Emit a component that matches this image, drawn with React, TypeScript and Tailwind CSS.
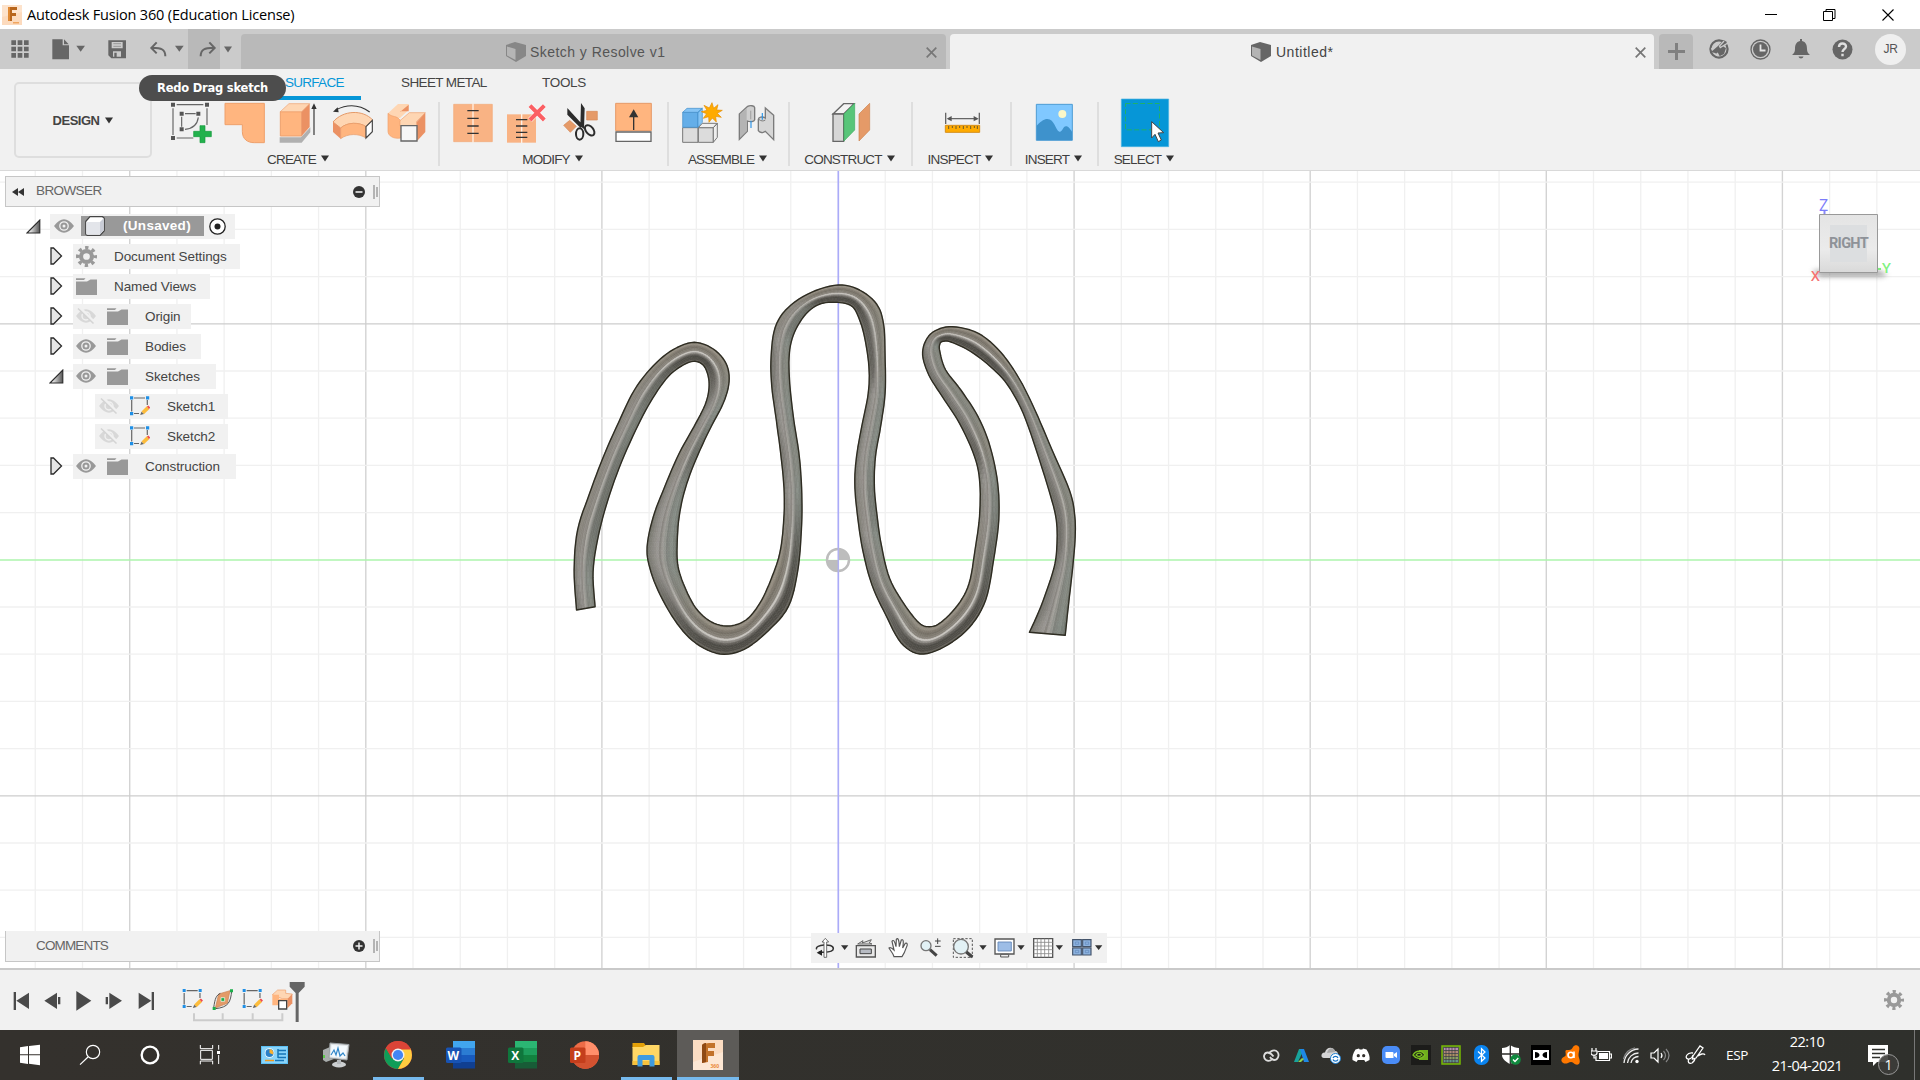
import React from "react";

type P = [number, number];

/* ---------- helpers ---------- */

// Drawing tile: the view box is in thirds of a pixel.
function Art({ v, children, className = "" }: { v: [number, number, number, number]; children?: React.ReactNode; className?: string }) {
  return (
    <svg className={"block shrink-0 " + className} width={v[2] / 3} height={v[3] / 3} viewBox={v.join(" ")} fill="none">
      {children}
    </svg>
  );
}

function Caret({ className = "", fill = "#333" }: { className?: string; fill?: string }) {
  return (
    <svg className={"block shrink-0 " + className} width="8" height="7" viewBox="0 0 8 7">
      <path d="M0 .5h8L4 6.5z" fill={fill} />
    </svg>
  );
}

/* ---------- title bar ---------- */

function TitleBar() {
  return (
    <header className="flex h-[29px] shrink-0 items-center bg-white font-['Open_Sans','Noto_Sans',sans-serif] text-black">
      <svg className="ml-[2px] block" width="20" height="20" viewBox="0 0 20 20">
        <rect width="20" height="20" fill="#fde3cc" />
        <path d="M0 12 20 7v13H0z" fill="#fbd3b2" opacity=".6" />
        <path d="M6 2h9v3h-5v3h4v3h-4v5H6z" fill="#b8651b" />
        <path d="M6 2h2v14H6z" fill="#e08a35" />
        <path d="M11 17h6v1.5h-6z" fill="#f0a55e" />
      </svg>
      <span className="ml-[5px] text-[14.5px] leading-[20px] tracking-[-0.17px] whitespace-nowrap">Autodesk Fusion 360 (Education License)</span>
      <div className="ml-auto flex items-center pr-[25px]">
        <svg width="13" height="14" viewBox="0 0 13 14"><path d="M1 6.500h12" stroke="#000" /></svg>
        <svg className="ml-[46px]" width="13" height="14" viewBox="0 0 13 14" fill="none" stroke="#000"><path d="M.5 3.500h9v9h-9zM3 3.500V1.500h9v9H10" /></svg>
        <svg className="ml-[46px]" width="13" height="14" viewBox="0 0 13 14"><path d="m.5 1.500 11 11m0-11-11 11" stroke="#000" strokeWidth="1.100" /></svg>
      </div>
    </header>
  );
}

/* ---------- document tab bar ---------- */

function CubeIcon() {
  return (
    <svg className="block" width="20" height="20" viewBox="0 0 20 20">
      <path d="M0 3 9 0l11 3v11l-10 6L0 14z" fill="#666" />
      <path d="M1 4.500 9.500 7v11L1 13.500z" fill="#b4b4b4" />
    </svg>
  );
}

function CloseX({ className = "" }: { className?: string }) {
  return (
    <svg className={className} width="11" height="11" viewBox="0 0 11 11"><path d="m.7.7 9.600 9.600m0-9.600L.7 10.300" stroke="#777" strokeWidth="1.700" /></svg>
  );
}

function TabBar() {
  return (
    <div className="flex h-[40px] shrink-0 bg-[#cbcbcb] font-['Liberation_Sans',Arial,sans-serif]">
      <div className="flex h-[40px] w-[188px] items-center">
        <Art v={[0, 0, 102, 120]}>
          <path d="M34 34h14v14H34zM53 34h14v14H53zM72 34h14v14H72zM34 53h14v14H34zM53 53h14v14H53zM72 53h14v14H72zM34 72h14v14H34zM53 72h14v14H53zM72 72h14v14H72z" fill="#666" />
        </Art>
        <Art v={[102, 0, 178, 120]}>
          <path d="M157 31h31v18h19v42h-50z" fill="#666" />
          <path d="m192 31 14 15h-14z" fill="#666" />
          <path d="M229 50h26l-13 18z" fill="#666" />
        </Art>
        <Art v={[280, 0, 140, 120]}>
          <path fillRule="evenodd" d="M326 34h53v54h-44l-9-9zM336 39v19h33V39zM340 67v16h24V67zM344 71h7v12h-7z" fill="#666" />
          <path d="M341 44h23M341 52h23" stroke="#999" strokeWidth="3" />
        </Art>
        <Art v={[420, 0, 144, 120]}>
          <path d="M496 82c0-20-12-26-38-26M470 40l-16 17 16 16" stroke="#666" strokeWidth="6" />
          <path d="M525 50h26l-13 18z" fill="#666" />
        </Art>
      </div>
      <div className="w-[32px] bg-[#b9b9b9]">
        <Art v={[564, 0, 96, 120]}>
          <path d="M602 82c0-20 12-26 38-26M628 40l16 17-16 16" stroke="#666" strokeWidth="6" />
        </Art>
      </div>
      <div className="flex w-[21px] items-center pl-[4px]"><Caret fill="#666" /></div>
      <div className="mt-[5px] flex w-[705px] items-center rounded-t-[4px] bg-[#b9b9b9] pt-[1px]">
        <span className="ml-[265px] opacity-60"><CubeIcon /></span>
        <span className="mt-[1px] ml-[4px] text-[14px] tracking-[0.45px] whitespace-nowrap text-[#555]">Sketch y Resolve v1</span>
        <CloseX className="mr-[9px] ml-auto" />
      </div>
      <div className="mt-[5px] ml-[4px] flex w-[704px] items-center rounded-t-[4px] bg-[#f1f1f1] pt-[1px]">
        <span className="ml-[301px]"><CubeIcon /></span>
        <span className="mt-[1px] ml-[5px] text-[14px] tracking-[0.5px] whitespace-nowrap text-[#444]">Untitled*</span>
        <CloseX className="mr-[8px] ml-auto" />
      </div>
      <div className="mt-[5px] ml-[5px] flex w-[34px] items-center justify-center rounded-t-[4px] bg-[#b9b9b9]">
        <svg width="17" height="17" viewBox="0 0 17 17"><path d="M8.500 0v17M0 8.500h17" stroke="#808080" strokeWidth="3" /></svg>
      </div>
      <div className="flex h-[40px] flex-1 items-center pl-[16px]">
        <svg width="20" height="20" viewBox="0 0 20 20" fill="none">
          <circle cx="10" cy="10" r="8.600" stroke="#666" strokeWidth="2.200" />
          <path d="M2 13 9 7l2-1 6 3-2 6-4 2-5-3z" fill="#666" />
          <path d="M14.500 1 9.500 6.500l1.500 3L14 8l4-5z" fill="#666" />
          <path d="m15 2-4.500 5 .8 1.500L18 4.500" stroke="#cbcbcb" strokeWidth="1.300" />
          <path d="M2.500 10.500 7 6M8 14l1.500 3" stroke="#cbcbcb" strokeWidth="1.800" />
        </svg>
        <svg className="ml-[21px]" width="21" height="21" viewBox="0 0 21 21" fill="none">
          <circle cx="10.500" cy="10.500" r="9.500" stroke="#666" strokeWidth="1.300" />
          <circle cx="10.500" cy="10.500" r="7.500" fill="#666" />
          <path d="M10.500 5.500v6h5" stroke="#e4e4e4" strokeWidth="1.800" />
        </svg>
        <svg className="ml-[21px]" width="18" height="20" viewBox="0 0 18 20">
          <path d="M8 0h2v2c4 1 5 4 5 8 0 3 1 4.500 3 6H0c2-1.500 3-3 3-6 0-4 1-7 5-8zM6.500 17.500h5c-.5 2.500-4.500 2.500-5 0z" fill="#666" />
        </svg>
        <svg className="ml-[22px]" width="21" height="21" viewBox="0 0 21 21" fill="none">
          <circle cx="10.500" cy="10.500" r="10" fill="#666" />
          <path d="M7 8c0-4.500 7-4.500 7-.5 0 2.500-3.500 2.500-3.500 5.500M10.500 14.800v2.400" stroke="#dedede" strokeWidth="2.400" />
        </svg>
        <span className="ml-[22px] flex h-[31px] w-[31px] items-center justify-center rounded-full bg-[#efefef] text-[12px] tracking-[-0.3px] text-[#555]">JR</span>
      </div>
    </div>
  );
}

/* ---------- ribbon ---------- */

const OR = "#ffb57f";
const OD = "#eb9163";
const OL = "#fed6b3";

function Divider() {
  return <div className="mt-[4px] h-[64px] w-[2px] shrink-0 bg-[#dedede]" />;
}

function Group({ label, className, children }: { label: string; className: string; children: React.ReactNode }) {
  return (
    <div className={"flex shrink-0 flex-col overflow-hidden " + className}>
      <div className="flex h-[51px]">{children}</div>
      <div className="flex h-[21px] items-center justify-center pr-[2px]">
        <span className="mt-[1px] text-[13.500px] leading-[20px] tracking-[-0.82px] whitespace-nowrap text-[#3f3f3f]">{label}</span>
        <Caret className="mt-[-2px] ml-[5px]" />
      </div>
    </div>
  );
}

function Ribbon() {
  return (
    <div className="flex h-[102px] shrink-0 border-b border-[#d9d9d9] bg-[#f1f1f1] font-['Liberation_Sans',Arial,sans-serif]">
      <div className="flex w-[160px] shrink-0 pt-[13px] pl-[14px]">
        <div className="flex h-[76px] w-[138px] items-center justify-center rounded-[5px] border-2 border-[#dedede] text-[13px] font-bold tracking-[-0.5px] text-[#444]">
          <span className="mt-[1px]">DESIGN</span>
          <Caret className="ml-[6px]" />
        </div>
      </div>
      <div className="flex flex-1 flex-col">
        <div className="flex h-[29px] text-[13.500px] leading-[28px] tracking-[-0.72px] whitespace-nowrap text-[#444]">
          <div className="relative ml-[108px] w-[93px] pl-[17px] text-[#0696d7]">
            SURFACE
            <div className="absolute -bottom-[2px] left-0 h-[4px] w-full bg-[#0696d7]" />
          </div>
          <div className="ml-[40px] w-[141px] tracking-[-0.62px]">SHEET METAL</div>
          <div className="tracking-[-0.3px]">TOOLS</div>
        </div>
        <div className="flex h-[72px]">
          <Group label="CREATE" className="w-[278px]">
            <Art v={[480, 294, 175, 153]}>
              <path d="M519 325v80M530 314h80M621 325v50M530 414h50" stroke="#666" strokeWidth="3.500" />
              <path d="M555 341h32M545 350v30M595 352c-3 22-18 34-40 36" stroke="#666" strokeWidth="3.500" />
              <g fill="#555">
                <path d="M513 308h12v12h-12zM615 308h12v12h-12zM513 408h12v12h-12zM539 335h12v12h-12zM589 335h12v12h-12zM539 382h12v12h-12z" />
              </g>
              <path d="M600 377h15v17h19v16h-19v18h-15v-18h-19v-16h19z" fill="#22b14c" stroke="#159a3c" strokeWidth="2" />
            </Art>
            <Art v={[655, 294, 165, 153]}>
              <path d="M676 310h118v118h-30c-20 0-36-10-36-34v-20h-52z" fill={OR} stroke="#eea06c" strokeWidth="3" />
            </Art>
            <Art v={[820, 294, 160, 153]}>
              <path d="M840 412h64l28-30v15l-26 31h-66z" fill="#b0b0b0" />
              <path d="M842 335h64v73h-64z" fill={OR} stroke="#eea06c" strokeWidth="3" />
              <path d="m842 335 26-24h62l-24 24z" fill={OL} stroke="#eea06c" strokeWidth="2" />
              <path d="m906 335 24-24v70l-24 27z" fill={OD} />
              <path d="M943 405v-84" stroke="#333" strokeWidth="3.500" /><path d="m943 310 8 17h-16z" fill="#333" />
            </Art>
            <Art v={[980, 294, 165, 153]}>
              <path d="M1006 330c35-18 72-16 102 6" stroke="#333" strokeWidth="3.500" /><path d="m998 335 14-13 3 15z" fill="#333" />
              <path d="M998 366c30-36 90-38 119-6l-20 20c-20-14-56-14-76 4z" fill={OL} stroke="#e59a68" strokeWidth="3" />
              <path d="M1021 384c20-18 56-18 76-4v34c-22-14-54-14-76 2z" fill={OR} stroke="#e59a68" strokeWidth="2" />
              <path d="m998 366 23 18v32l-23-20z" fill={OD} />
              <path d="m1097 380 19-19v34l-19 19z" fill="#fff" stroke="#444" strokeWidth="3.500" />
            </Art>
            <Art v={[1145, 294, 169, 153]}>
              <path d="m1163 340 30-28h32v18l-26 24h-36z" fill={OL} />
              <path d="m1199 336 26-22v20h-26z" fill={OD} />
              <path d="M1163 340c14 14 24 4 38 22v52c-20 4-38-6-38-20z" fill={OR} stroke="#eea06c" strokeWidth="2" />
              <path d="m1199 362 28-24h48l-26 26v14h-50z" fill={OL} stroke="#eea06c" strokeWidth="2" />
              <path d="m1249 366 26-28v58l-24 26z" fill={OD} />
              <path d="M1202 377h48v46h-48z" fill="#f6f6f6" stroke="#666" strokeWidth="4" />
            </Art>
          </Group>
          <Divider />
          <Group label="MODIFY" className="w-[227px]">
            <Art v={[0, 54, 178, 153]}>
              <path d="M41 73h116v112H41z" fill="#f9b384" stroke="#f3ab7a" strokeWidth="2" />
              <path d="M99 70v118" stroke="#fff1e6" strokeWidth="4" />
              <path d="M82 92h34M82 115h34M82 138h34M82 160h34" stroke="#333" strokeWidth="4" />
            </Art>
            <Art v={[178, 54, 167, 153]}>
              <path d="M202 103h87v85h-87z" fill="#f9b384" />
              <path d="M246 101v88" stroke="#fff1e6" strokeWidth="4" />
              <path d="M229 119h34M229 138h34M229 157h34M229 172h34" stroke="#333" strokeWidth="4" />
              <path d="m271 77 43 43m0-43-43 43" stroke="#fff" strokeWidth="16" opacity=".7" />
              <path d="m271 77 43 43m0-43-43 43" stroke="#fb5f63" strokeWidth="12" />
            </Art>
            <Art v={[345, 54, 155, 153]}>
              <path d="M440 94h32v26h-32zM371 136l18-15 20 18-18 18z" fill="#e59a68" stroke="#d58a58" strokeWidth="2" />
              <path d="m382 84 46 50-6 10-40-40zM423 69l11 16-2 62-11-8z" fill="#2c2c2c" />
              <ellipse cx="419" cy="162" rx="11" ry="17" stroke="#2c2c2c" strokeWidth="6" />
              <ellipse cx="449" cy="151" rx="11" ry="18" transform="rotate(-40 449 151)" stroke="#2c2c2c" strokeWidth="6" />
            </Art>
            <Art v={[500, 54, 181, 153]}>
              <path d="M526 70h107v82H526z" fill={OR} stroke="#e59a68" strokeWidth="3" />
              <path d="M527 156h105v28H527z" fill="#fff" stroke="#666" strokeWidth="4" />
              <path d="M580 150v-44" stroke="#333" strokeWidth="4" /><path d="m580 88 14 24h-28z" fill="#333" />
            </Art>
          </Group>
          <Divider />
          <Group label="ASSEMBLE" className="w-[119px]">
            <Art v={[687, 54, 173, 153]}>
              <path d="M728 143h46v44h-46zM775 143h45v44h-45z" fill="#dcdcdc" stroke="#777" strokeWidth="3" />
              <path d="m775 143 12-13h45l-12 13zM820 143l12-13v42l-12 15z" fill="#efefef" stroke="#777" strokeWidth="3" />
              <path d="M728 97h46v45h-46z" fill="#64aee8" stroke="#3f8cc8" strokeWidth="2" />
              <path d="m728 97 13-12h46l-13 12zM774 97l13-12v42l-13 14z" fill="#85c4f5" stroke="#3f8cc8" strokeWidth="2" />
              <path d="m816 68 5 17 13-11-4 16 17 1-15 9 12 12-17-3 2 17-12-12-10 13-1-17-16 5 10-14-16-6 17-4-9-15 16 8z" fill="#ffab00" stroke="#e58d00" strokeWidth="2" />
            </Art>
            <Art v={[860, 54, 184, 153]}>
              <path d="M897 102 922 79c8-4 20-2 21 4v36c-2 6-12 8-22 4v31l-24 24z" fill="#cfcfcf" stroke="#7b7b7b" strokeWidth="4" />
              <path d="m899 103 20-19v70l-20 19z" fill="#b4b4b4" />
              <path d="M931 92v26" stroke="#aaa" strokeWidth="4" />
              <path d="M1000 106 975 84v30c-10-6-20-2-21 4v34c4 6 14 8 21 2l25 25z" fill="#d6d6d6" stroke="#7b7b7b" strokeWidth="4" />
              <path d="M955 118c8 6 14 6 20 2" stroke="#7b7b7b" strokeWidth="3" />
              <path d="M932 122v22M966 99v20" stroke="#2b95e9" strokeWidth="3.500" />
            </Art>
          </Group>
          <Divider />
          <Group label="CONSTRUCT" className="w-[121px]">
            <Art v={[30, 54, 363, 153]}>
              <path d="M159 102 191 71h31l-31 31z" fill="#f3f3f3" stroke="#666" strokeWidth="4" />
              <path d="M159 102h32v82h-32z" fill="#d6d6d6" stroke="#666" strokeWidth="4" />
              <path d="m192 102 32-32v80l-32 33z" fill="#58c579" stroke="#3fae62" strokeWidth="2" />
              <path d="m237 102 32-32v80l-32 33z" fill="#e59a68" stroke="#cd834f" strokeWidth="2" />
            </Art>
          </Group>
          <Divider />
          <Group label="INSPECT" className="w-[97px]">
            <Art v={[399, 54, 291, 153]}>
              <path d="M497 98v34M598 98v34M505 116h86" stroke="#666" strokeWidth="4" />
              <path d="m500 116 15-8v16zM596 116l-15-8v16z" fill="#555" />
              <path d="M496 136h103v21H496z" fill="#ffab00" stroke="#d58e1b" strokeWidth="3" />
              <path d="M506 138v9M517 138v6M528 138v9M539 138v6M550 138v9M561 138v6M572 138v9M583 138v6M592 138v9" stroke="#6b5a2b" strokeWidth="3" />
            </Art>
          </Group>
          <Divider />
          <Group label="INSERT" className="w-[85px]">
            <Art v={[696, 54, 255, 153]}>
              <path d="M769 73h108v108H769z" fill="#80c8ff" stroke="#4e9cd3" strokeWidth="3" />
              <circle cx="847" cy="102" r="12" fill="#fbf8c9" />
              <path d="M770 137c16-16 24-20 32-20 22 0 24 34 36 38 10 2 10-16 20-16 8 0 12 8 18 16v25H770z" fill="#3e92cc" />
            </Art>
          </Group>
          <Divider />
          <Group label="SELECT" className="w-[92px]">
            <Art v={[957, 54, 276, 153]}>
              <path d="M1024 57h142v143h-142z" fill="#0696d7" stroke="#4db3e2" strokeWidth="2" />
              <path d="M1036.500 70.500h102v79h-102z" stroke="#1fb06a" strokeWidth="3" strokeDasharray="15 7" />
              <path d="m1115 125 36 33-17 1 10 21-9 5-10-22-10 11z" fill="#fff" stroke="#444" strokeWidth="3" />
            </Art>
          </Group>
        </div>
      </div>
    </div>
  );
}

/* ---------- model geometry ---------- */

// Matching points of the two silhouettes of the tube: [ax, ay, bx, by].
const RIBS: number[][] = [
  [48, 1020, 102, 1010], [41, 900, 96, 905], [51, 780, 111, 800], [86, 670, 139, 690], [126, 560, 179, 575],
  [171, 455, 227, 465], [216, 360, 269, 385], [271, 287, 314, 320], [330, 238, 358, 285], [390, 217, 392, 274],
  [445, 237, 418, 288], [482, 280, 431, 322], [491, 335, 432, 360], [474, 400, 421, 405], [434, 480, 389, 470],
  [394, 570, 346, 550], [364, 655, 304, 650], [346, 740, 271, 740], [340, 830, 253, 830], [343, 890, 261, 895],
  [362, 950, 291, 975], [395, 1015, 341, 1062], [440, 1056, 395, 1120], [490, 1068, 465, 1152], [540, 1050, 535, 1138],
  [580, 1000, 605, 1082], [612, 930, 663, 1010], [638, 850, 690, 905], [649, 760, 701, 780], [651, 670, 702, 670],
  [643, 570, 695, 560], [628, 450, 679, 450], [615, 350, 667, 340], [613, 260, 666, 250], [625, 172, 681, 187],
  [662, 113, 714, 132], [730, 67, 755, 102], [808, 45, 805, 97], [870, 60, 848, 109], [920, 103, 870, 150],
  [940, 165, 885, 205], [944, 260, 897, 290], [944, 370, 895, 370], [931, 470, 876, 470], [916, 560, 861, 560],
  [913, 650, 856, 640], [921, 740, 863, 730], [934, 830, 879, 840], [957, 925, 906, 945], [998, 1000, 946, 1035],
  [1042, 1058, 990, 1118], [1072, 1070, 1045, 1152], [1105, 1058, 1115, 1131], [1155, 1005, 1188, 1073], [1188, 940, 1236, 990],
  [1205, 840, 1259, 870], [1218, 740, 1274, 750], [1219, 640, 1271, 640], [1204, 560, 1249, 530], [1160, 460, 1214, 440],
  [1110, 380, 1164, 360], [1071, 315, 1120, 300], [1053, 255, 1103, 245], [1063, 210, 1103, 222], [1090, 182, 1112, 214],
  [1140, 170, 1135, 216], [1215, 190, 1190, 243], [1280, 247, 1250, 290], [1334, 327, 1300, 345], [1379, 420, 1345, 430],
  [1429, 540, 1386, 550], [1479, 660, 1425, 680], [1494, 730, 1441, 750], [1496, 800, 1443, 820], [1489, 890, 1434, 895],
  [1477, 1000, 1396, 1010], [1467, 1096, 1363, 1087],
];

// Canvas coordinates of a silhouette point.
const toCanvas = (x: number, y: number): P => [560 + x / 2.9037, 99 + y / 3];

function catmull(p0: number, p1: number, p2: number, p3: number, t: number) {
  return 0.5 * (2 * p1 + (p2 - p0) * t + (2 * p0 - 5 * p1 + 4 * p2 - p3) * t * t + (3 * p1 - p0 - 3 * p2 + p3) * t * t * t);
}

const STEPS = 6;
const sideA: P[] = [];
const sideB: P[] = [];
for (let i = 0; i < RIBS.length - 1; i++) {
  const q = [Math.max(i - 1, 0), i, i + 1, Math.min(i + 2, RIBS.length - 1)].map((k) => RIBS[k]);
  for (let s = 0; s < STEPS + (i === RIBS.length - 2 ? 1 : 0); s++) {
    const v = [0, 1, 2, 3].map((c) => catmull(q[0][c], q[1][c], q[2][c], q[3][c], s / STEPS));
    sideA.push(toCanvas(v[0], v[1]));
    sideB.push(toCanvas(v[2], v[3]));
  }
}

type Stop = [number, number, number, number];
const BY_HEIGHT: Stop[] = [[-1, 112, 110, 102], [-0.8, 80, 78, 72], [-0.45, 78, 76, 70], [-0.2, 118, 115, 109], [-0.02, 208, 206, 200], [0.15, 136, 131, 122], [0.5, 116, 110, 99], [0.8, 152, 145, 132], [1, 134, 128, 116]];
const BY_SIDE: Stop[] = [[-1, 116, 116, 108], [-0.7, 136, 134, 128], [-0.25, 156, 153, 149], [-0.08, 122, 119, 113], [0.06, 182, 180, 175], [0.22, 124, 127, 121], [0.6, 136, 142, 135], [1, 110, 116, 108]];

function ramp(stops: Stop[], v: number) {
  let i = 1;
  while (i < stops.length - 1 && v > stops[i][0]) i++;
  const a = stops[i - 1];
  const b = stops[i];
  const t = Math.min(1, Math.max(0, (v - a[0]) / (b[0] - a[0])));
  return [1, 2, 3].map((k) => a[k] + (b[k] - a[k]) * t);
}

const BANDS = 13;
const mix = (a: P, b: P, t: number): P => [a[0] + (b[0] - a[0]) * t, a[1] + (b[1] - a[1]) * t];
const f = (p: P) => p[0].toFixed(1) + " " + p[1].toFixed(1);

const facets: { d: string; c: string }[] = [];
for (let i = 0; i < sideA.length - 1; i++) {
  const dx = sideA[i][0] - sideB[i][0];
  const dy = -(sideA[i][1] - sideB[i][1]);
  const len = Math.hypot(dx, dy) || 1;
  const ux = dx / len;
  const uy = dy / len;
  const w = Math.min(1, Math.abs(uy) * 1.2);
  for (let b = 0; b < BANDS; b++) {
    const t0 = b / BANDS;
    const t1 = (b + 1) / BANDS;
    const n = 1 - (t0 + t1);
    const h = ramp(BY_HEIGHT, n * (uy < 0 ? -1 : 1));
    const s = ramp(BY_SIDE, n * (ux < 0 ? -1 : 1));
    const c = h.map((v, k) => Math.round(v * w + s[k] * (1 - w)));
    facets.push({
      d: "M" + f(mix(sideA[i], sideB[i], t0)) + "L" + f(mix(sideA[i + 1], sideB[i + 1], t0)) + "L" + f(mix(sideA[i + 1], sideB[i + 1], t1)) + "L" + f(mix(sideA[i], sideB[i], t1)) + "z",
      c: "rgb(" + c.join(",") + ")",
    });
  }
}
const outline = "M" + sideA.map(f).join("L") + "L" + [...sideB].reverse().map(f).join("L") + "z";

function Scene() {
  const lines: React.ReactNode[] = [];
  for (let i = -18; i <= 23; i++) {
    if (i === 0) continue;
    const x = 838 + i * 47.22;
    lines.push(<path key={"v" + i} d={"M" + x + " 0V797"} stroke={i % 5 ? "#f0f0f0" : "#d3d3d3"} strokeWidth={i % 5 ? 1.3 : 1.4} />);
  }
  for (let j = -8; j <= 8; j++) {
    if (j === 0) continue;
    const y = 388.8 + j * 47.2;
    lines.push(<path key={"h" + j} d={"M0 " + y + "H1920"} stroke={j % 5 ? "#f0f0f0" : "#cdcdcd"} strokeWidth={1.3} />);
  }
  return (
    <svg className="absolute inset-0" width="1920" height="797" viewBox="0 0 1920 797" fill="none">
      {lines}
      <path d="M0 389H1920" stroke="#adf5ad" strokeWidth="1.700" />
      <path d="M838.300 0V797" stroke="#ababf8" strokeWidth="1.700" />
      <g>
        <circle cx="838" cy="389" r="11" fill="#fff" fillOpacity=".8" stroke="#bdbdbd" strokeWidth="2.500" />
        <path d="M838 389v-11a11 11 0 0 1 11 11zM838 389v11a11 11 0 0 1-11-11z" fill="#bdbdbd" />
        <path d="M838.300 377v24" stroke="#b0b0f0" strokeWidth="1.500" />
      </g>
      {facets.map((q, i) => (
        <path key={i} d={q.d} fill={q.c} stroke={q.c} strokeWidth=".6" />
      ))}
      <path d={outline} stroke="#2e2c22" strokeWidth="1.400" strokeLinejoin="round" />
    </svg>
  );
}

/* ---------- browser panel ---------- */

function Eye() {
  return (
    <svg className="block shrink-0" width="20" height="14" viewBox="0 0 20 14" fill="none">
      <path d="M0 7Q10-6.500 20 7 10 20.500 0 7z" fill="#999" />
      <circle cx="10" cy="7" r="4.200" stroke="#f1f1f1" strokeWidth="1.300" />
      <circle cx="10" cy="7" r="1.500" fill="#f1f1f1" />
    </svg>
  );
}

function EyeOff() {
  return (
    <svg className="block shrink-0" width="20" height="16" viewBox="0 0 20 16" fill="none">
      <path d="M0 8Q10-5.500 20 8 10 21.500 0 8z" fill="#d8d8d8" />
      <circle cx="10" cy="8" r="4" stroke="#f1f1f1" strokeWidth="1.400" />
      <path d="M3.500-.5 19 15" stroke="#f1f1f1" strokeWidth="3" />
      <path d="M2 .5 17.500 15.500" stroke="#d4d4d4" strokeWidth="1.500" />
    </svg>
  );
}

function Folder() {
  return (
    <svg className="block shrink-0" width="21" height="17" viewBox="0 0 21 17">
      <path d="M0 .3h9.500L8 2H0zM0 3.500h11l3.500-2H21V17H0z" fill="#999" />
    </svg>
  );
}

function Gear({ size }: { size: number }) {
  return (
    <svg className="block shrink-0" width={size} height={size} viewBox="0 0 20 20" fill="none">
      <circle cx="10" cy="10" r="5.200" stroke="#999" strokeWidth="4" />
      <circle cx="10" cy="10" r="8.400" stroke="#999" strokeWidth="3.200" strokeDasharray="3.200 3.397" strokeDashoffset="1.600" />
    </svg>
  );
}

function SketchIcon() {
  return (
    <svg className="block shrink-0" width="20" height="20" viewBox="0 0 20 20" fill="none">
      <path d="M4 2h11M1.700 4v11.500M4 17.500h5M17.300 4v5" stroke="#666" strokeWidth="1.200" />
      <path d="M0 .3h3.200v3.200H0zM16 .3h3.200v3.200H16zM0 16h3.200v3.200H0z" fill="#1e8fe6" />
      <path d="m11.500 15.500 5.300-5.200 2.600 2.600-5.500 5.300z" fill="#fcbc3c" />
      <path d="m17 10.400 1.300-1 2 2.200-1.400 1.400z" fill="#f04a50" />
      <path d="m11.500 15.700 2.400 2.400-3.700 1z" fill="#666" />
    </svg>
  );
}

function Expander({ open }: { open?: boolean }) {
  return open ? (
    <svg className="block" width="15" height="15" viewBox="0 0 15 15">
      <defs><linearGradient id="tri" x1="0" x2="1"><stop offset=".2" stopColor="#eee" /><stop offset="1" stopColor="#555" /></linearGradient></defs>
      <path d="M1 14 13.800 1v13z" fill="url(#tri)" stroke="#2b2b2b" strokeWidth="1.100" />
    </svg>
  ) : (
    <svg className="block" width="13" height="18" viewBox="0 0 13 18">
      <path d="M1 1h2.500l8 8-8 8H1z" fill="#e6e6e6" stroke="#2b2b2b" strokeWidth="1.300" />
    </svg>
  );
}

type Row = { label: string; state: "open" | "closed" | "leaf"; eye?: "on" | "off"; icon: "folder" | "gear" | "sketch"; box: string };
const ROWS: Row[] = [
  { label: "Document Settings", state: "closed", icon: "gear", box: "w-[167px]" },
  { label: "Named Views", state: "closed", icon: "folder", box: "w-[137px]" },
  { label: "Origin", state: "closed", eye: "off", icon: "folder", box: "w-[118px]" },
  { label: "Bodies", state: "closed", eye: "on", icon: "folder", box: "w-[128px]" },
  { label: "Sketches", state: "open", eye: "on", icon: "folder", box: "w-[143px]" },
  { label: "Sketch1", state: "leaf", eye: "off", icon: "sketch", box: "w-[133px]" },
  { label: "Sketch2", state: "leaf", eye: "off", icon: "sketch", box: "w-[133px]" },
  { label: "Construction", state: "closed", eye: "on", icon: "folder", box: "w-[163px]" },
];

function Grip() {
  return <svg className="block" width="5" height="14" viewBox="0 0 5 14"><path d="M1 0v14M4 2v10" stroke="#777" /></svg>;
}

function Browser() {
  return (
    <div className="w-[375px]">
      <div className="flex h-[31px] items-center border border-[#c6c6c6] bg-[#f1f1f1]">
        <svg className="ml-[6px]" width="12" height="8" viewBox="0 0 12 8"><path d="M6 0v8L0 4zM12 0v8L6 4z" fill="#333" /></svg>
        <span className="ml-[12px] text-[13.500px] tracking-[-0.6px] text-[#666]">BROWSER</span>
        <svg className="ml-auto" width="12" height="12" viewBox="0 0 12 12"><circle cx="6" cy="6" r="6" fill="#333" /><path d="M2.500 6h7" stroke="#f1f1f1" strokeWidth="1.600" /></svg>
        <span className="mr-[1px] ml-[8px]"><Grip /></span>
      </div>
      <div className="mt-[4px] flex h-[30px] items-center">
        <div className="flex w-[45px] justify-end pr-[9px]"><Expander open /></div>
        <div className="flex h-[25px] w-[185px] items-center bg-[#f1f1f1] pl-[4px]">
          <Eye />
          <div className="ml-[7px] flex h-[20px] w-[123px] items-center bg-[#999] pl-[4px]">
            <svg className="block" width="20" height="20" viewBox="0 0 20 20">
              <path d="M.7 5.500 5 .7h12.500l1.800 1.500v12.500L15 19.300H2.200L.7 18z" fill="#fff" stroke="#444" strokeWidth="1.200" />
              <path d="M1.300 6H15v12.600H1.300z" fill="#e3e5ea" /><path d="M15 6l3.700-3.800v12L15 18.600z" fill="#c9ccd6" />
            </svg>
            <span className="ml-[18px] text-[13.500px] font-bold tracking-[0.3px] text-white">(Unsaved)</span>
          </div>
          <svg className="ml-[5px]" width="17" height="17" viewBox="0 0 17 17" fill="none"><circle cx="8.500" cy="8.500" r="7.700" fill="#fff" stroke="#222" strokeWidth="1.300" /><circle cx="8.500" cy="8.500" r="3" fill="#222" /></svg>
        </div>
      </div>
      {ROWS.map((r) => (
        <div key={r.label} className="flex h-[30px] items-center">
          <div className={r.state === "leaf" ? "w-[90px]" : "flex w-[68px] justify-end " + (r.state === "open" ? "pr-[9px]" : "pr-[10px]")}>
            {r.state !== "leaf" && <Expander open={r.state === "open"} />}
          </div>
          <div className={"flex h-[25px] items-center bg-[#f1f1f1] " + (r.icon === "sketch" ? "pl-[4px] " : "pl-[3px] ") + r.box}>
            {r.eye && <span className="mr-[11px]">{r.eye === "on" ? <Eye /> : <EyeOff />}</span>}
            {r.icon === "gear" && <Gear size={21} />}
            {r.icon === "folder" && <Folder />}
            {r.icon === "sketch" && <SketchIcon />}
            <span className="mt-[1px] ml-[17px] text-[13.500px] leading-[20px] tracking-[-0.08px] whitespace-nowrap text-[#444]">{r.label}</span>
          </div>
        </div>
      ))}
    </div>
  );
}

/* ---------- overlays of the canvas ---------- */

function ViewCube() {
  return (
    <div className="absolute top-[22px] left-[1806px] h-[92px] w-[92px]">
      <svg className="absolute inset-0" width="92" height="92" viewBox="0 0 92 92" fill="none">
        <defs>
          <linearGradient id="cube" x1="0" y1="0" x2="0" y2="1"><stop offset="0" stopColor="#e4e4e4" /><stop offset=".6" stopColor="#ebebeb" /><stop offset="1" stopColor="#d9d9d9" /></linearGradient>
          <filter id="soft" x="-20%" y="-200%" width="140%" height="500%"><feGaussianBlur stdDeviation="2.500" /></filter>
        </defs>
        <path d="M6 77h66l10 5-6 2H14z" fill="#777" opacity=".6" filter="url(#soft)" />
        <path d="M13.500 21.500h58v58h-58z" fill="url(#cube)" stroke="#999" />
        <path d="M24 32h37v37H24z" fill="#dcdee0" />
        <path d="M72 76h3" stroke="#7df07d" strokeWidth="2" />
        <path d="M18.500 18v3" stroke="#8a8af5" strokeWidth="2" />
      </svg>
      <span className="absolute top-[41px] left-[23px] w-[38px] text-center font-['Roboto',sans-serif] text-[14.500px] leading-[20px] font-bold tracking-[-0.7px] text-[#8e9298]">RIGHT</span>
      <span className="absolute top-[2px] left-[13px] font-['Open_Sans',sans-serif] text-[16px] leading-[20px] text-[#7c7cfa]">Z</span>
      <span className="absolute top-[64px] left-[76px] font-['Open_Sans',sans-serif] text-[15px] leading-[20px] font-semibold text-[#80f280]">Y</span>
      <span className="absolute top-[73px] left-[5px] font-['Open_Sans',sans-serif] text-[14px] leading-[20px] font-semibold text-[#f57070]">X</span>
    </div>
  );
}

function NavBar() {
  const caret = (x: number) => <path d={"M" + x + " 76h22l-11 14z"} fill="#333" />;
  return (
    <div className="absolute top-[762px] left-[811px] flex h-[30px] w-[296px] overflow-hidden bg-[#f1f1f1]">
      <Art v={[63, 39, 120, 90]}>
        <path d="M80 88c-8-14 50-20 50-2 0 6-14 10-28 11H86" stroke="#333" strokeWidth="4.500" /><path d="m80 98 16-9v18z" fill="#222" />
        <path d="M102 112V66h-6l10-11 10 11h-6v46z" fill="#fff" stroke="#555" strokeWidth="2.500" />
        {caret(153)}
      </Art>
      <Art v={[183, 39, 90, 90]}>
        <path d="M199 77h57v34h-57z" stroke="#555" strokeWidth="4" fill="#e8e8e8" />
        <path d="M210 87h34v14h-34z" fill="#b8bcc4" stroke="#444" strokeWidth="3" />
        <path d="m203 72 16-10-2 7 27-10-6 10 8 3z" fill="#ddd" stroke="#666" strokeWidth="3" />
      </Art>
      <Art v={[273, 39, 105, 90]}>
        <path d="M312 110c-2-10-10-16-15-26 4-4 8-1 15 6L306 64c4-6 8-2 12 16l1-22c4-5 8-2 9 22l6-20c5-3 8 0 4 24l8-14c5-2 8 2 4 10-4 12-8 22-14 30z" fill="#fff" stroke="#555" strokeWidth="3.500" />
      </Art>
      <Art v={[378, 39, 97, 90]}>
        <circle cx="408" cy="77" r="15" fill="#e2f1f5" stroke="#777" strokeWidth="4" />
        <path d="m420 89 20 18" stroke="#444" strokeWidth="9" />
        <path d="M435 63h17M443 55v17M435 79h17" stroke="#444" strokeWidth="3" />
      </Art>
      <Art v={[475, 39, 125, 90]}>
        <path d="M491 56h57v56h-57z" stroke="#555" strokeWidth="3" strokeDasharray="7 5" />
        <circle cx="514" cy="80" r="22" fill="#e2f1f5" stroke="#777" strokeWidth="4" />
        <path d="m530 96 18 15" stroke="#444" strokeWidth="10" />
        {caret(569)}
      </Art>
      <Art v={[600, 39, 115, 90]}>
        <path d="M615 57h57v45h-57z" fill="#fff" stroke="#555" strokeWidth="4" />
        <path d="M624 66h40v27h-40z" fill="#9dbde6" stroke="#5e83b5" strokeWidth="2.500" />
        <path d="M632 103h24v8h-24z" fill="#eee" stroke="#555" strokeWidth="3" />
        {caret(682)}
      </Art>
      <Art v={[715, 39, 115, 90]}>
        <path d="M732 56h57v56h-57z" fill="#fff" stroke="#555" strokeWidth="4" />
        <path d="M743 56v56M754 56v56M765 56v56M777 56v56M732 67h57M732 78h57M732 89h57M732 101h57" stroke="#888" strokeWidth="2.500" />
        {caret(798)}
      </Art>
      <Art v={[830, 39, 121, 90]}>
        <path d="M847 59h26v21h-26zM877 59h25v21h-25zM847 84h26v21h-26zM877 84h25v21h-25z" fill="#8db3e0" stroke="#44546b" strokeWidth="3.500" />
        <path d="M855 66h10v7h-10zM885 66h10v7h-10zM855 91h10v7h-10zM885 91h10v7h-10z" stroke="#6088ba" strokeWidth="2" />
        {caret(914)}
      </Art>
    </div>
  );
}

function Canvas() {
  return (
    <main className="relative flex h-[797px] shrink-0 flex-col justify-between overflow-hidden bg-white pt-[5px] pb-[6px] pl-[5px] font-['Liberation_Sans',Arial,sans-serif]">
      <Scene />
      <div className="relative"><Browser /></div>
      <div className="relative flex h-[31px] w-[375px] items-center border border-t-0 border-[#c6c6c6] bg-[#f1f1f1]">
        <span className="mt-[1px] ml-[30px] text-[13.500px] tracking-[-0.85px] text-[#666]">COMMENTS</span>
        <svg className="ml-auto" width="12" height="12" viewBox="0 0 12 12"><circle cx="6" cy="6" r="6" fill="#333" /><path d="M2.500 6h7M6 2.500v7" stroke="#f1f1f1" strokeWidth="1.500" /></svg>
        <span className="mr-[1px] ml-[8px]"><Grip /></span>
      </div>
      <NavBar />
      <ViewCube />
    </main>
  );
}

/* ---------- timeline ---------- */

function SketchMark({ x }: { x: number }) {
  return (
    <g transform={"translate(" + x + " 207) scale(3)"}>
      <path d="M4 1.700h11M1.500 4v11.500M4 17.500h5M17.300 4v5" stroke="#666" strokeWidth="1.200" />
      <path d="M0 0h3v3H0zM16 0h3v3h-3zM0 16h3v3H0z" fill="#1e8fe6" />
      <path d="m11.500 15.500 5.300-5.200 2.600 2.600-5.500 5.300z" fill="#fcbc3c" />
      <path d="m17 10.400 1.300-1 2 2.200-1.400 1.400z" fill="#f04a50" />
      <path d="m11.500 15.700 2.400 2.400-3.700 1z" fill="#666" />
    </g>
  );
}

function Timeline() {
  const G = "#4a4a4a";
  return (
    <div className="flex h-[62px] shrink-0 border-t-2 border-[#c9c9c9] bg-[#f1f1f1]">
      <Art v={[0, 150, 110, 180]}><path d="M41 216h7v54h-7zM87 218v49l-38-25z" fill={G} /></Art>
      <Art v={[110, 150, 90, 180]}><path d="M170 218v49l-38-25zM173 231h7v22h-7z" fill={G} /></Art>
      <Art v={[200, 150, 95, 180]}><path d="M228 213v59l45-30z" fill={G} /></Art>
      <Art v={[295, 150, 95, 180]}><path d="M329 218v49l38-25zM318 231h7v22h-7z" fill={G} /></Art>
      <Art v={[390, 150, 137, 180]}><path d="M416 218v49l38-25zM455 216h7v54h-7z" fill={G} /></Art>
      <Art v={[527, 150, 96, 180]}>
        <SketchMark x={547} />
        <path d="M581 280v21h42" stroke="#ccc" strokeWidth="6" />
      </Art>
      <Art v={[623, 150, 87, 180]}>
        <path d="m655 222 34-10-8 38-36 14z" fill="#e39a68" stroke="#c97f4d" strokeWidth="2" />
        <path d="M640 264c4-30 8-38 20-44M645 266c40-4 46-20 49-54" stroke="#555" strokeWidth="3" />
        <path d="M662 233h11v11h-11z" fill="#1cae4c" stroke="#fff" strokeWidth="2" />
        <path d="M637 261h9v9h-9zM689 208h9v9h-9z" fill="#1cae4c" />
        <path d="M667 280v18M623 301h87" stroke="#ccc" strokeWidth="6" />
      </Art>
      <Art v={[710, 150, 92, 180]}>
        <SketchMark x={727} />
        <path d="M757 280v18M710 301h92" stroke="#ccc" strokeWidth="6" />
      </Art>
      <Art v={[802, 150, 128, 180]}>
        <path d="m818 224 16-14h24v10l20 2-10 14h-20z" fill={OL} stroke="#eea06c" strokeWidth="2" />
        <path d="M818 224h20v12h26v28h-26v-8h-20z" fill={OR} />
        <path d="m864 236 14-14v28l-14 14z" fill={OD} />
        <path d="M837 242h24v25h-24z" fill="#fff" stroke="#444" strokeWidth="4" />
        <path d="M802 301h46v-21" stroke="#ccc" strokeWidth="6" />
        <path d="M870 186h45v14l-18 19v87h-9v-87l-18-19z" fill="#666" />
      </Art>
      <div className="mr-[16px] ml-auto flex items-center"><Gear size={20} /></div>
    </div>
  );
}

/* ---------- taskbar ---------- */

function Pinned({ children, mark, active }: { children: React.ReactNode; mark?: boolean; active?: boolean }) {
  return (
    <div className={"relative flex h-[50px] w-[62px] shrink-0 items-center justify-center " + (active ? "bg-[#5d5b58]" : "")}>
      {children}
      {mark && <div className={"absolute bottom-0 h-[3px] bg-[#76b9ed] " + (active ? "w-[62px]" : "w-[51px]")} />}
    </div>
  );
}

function Tray({ children }: { children: React.ReactNode }) {
  return <div className="flex h-[50px] w-[30px] shrink-0 items-center justify-center">{children}</div>;
}

function OfficeTile({ letter, bands, plate }: { letter: string; bands: string[]; plate: string }) {
  return (
    <div className="relative h-[28px] w-[29px]">
      <svg className="absolute inset-0" width="29" height="28" viewBox="0 0 29 28">
        <rect x="7" y="0" width="22" height="7.200" fill={bands[0]} />
        <rect x="7" y="7" width="22" height="7.200" fill={bands[1]} />
        <rect x="7" y="14" width="22" height="7.200" fill={bands[2]} />
        <rect x="7" y="21" width="22" height="6.500" fill={bands[3]} />
        <rect x="0" y="6.500" width="15.500" height="15.500" rx="1.500" fill={plate} />
      </svg>
      <span className="absolute top-[6.500px] left-0 w-[15.500px] text-center font-['Open_Sans',sans-serif] text-[12px] leading-[16px] font-bold text-white">{letter}</span>
    </div>
  );
}

function Taskbar() {
  return (
    <footer className="flex h-[50px] shrink-0 bg-linear-to-r from-[#34312d] to-[#2f302c] font-['Open_Sans','Noto_Sans',sans-serif] text-white">
      <Art v={[0, 330, 180, 150]}>
        <path d="m60 382 24-4v25H60zM87 378l33-4v29H87zM60 406h24v26l-24-4zM87 406h33v30l-33-5z" fill="#fff" />
      </Art>
      <Art v={[180, 330, 180, 150]}>
        <circle cx="279" cy="396" r="20" stroke="#fff" strokeWidth="3.500" /><path d="m264 411-24 23" stroke="#fff" strokeWidth="3.500" />
      </Art>
      <Art v={[360, 330, 180, 150]}><circle cx="450" cy="405" r="25" stroke="#fff" strokeWidth="7" /></Art>
      <Art v={[540, 330, 189, 150]}>
        <path d="M602 391h35v27h-35zM601 375v11h37v-11M601 433v-10h37v10M656 375v14M656 405v27" stroke="#fff" strokeWidth="3" />
        <path d="M651 393h9v9h-9z" fill="#fff" />
      </Art>
      <Pinned>
        <svg width="27" height="18" viewBox="0 0 27 18" fill="none">
          <rect width="27" height="18" fill="#5cc0f5" /><rect x="1" y="1" width="25" height="16" fill="#8ad4fa" />
          <circle cx="8.500" cy="7" r="4.800" fill="#fff" /><circle cx="8.500" cy="7" r="4" fill="#2a80c8" /><path d="M8.500 7V3a4 4 0 0 1 3.500 5.500z" fill="#f8b030" />
          <path d="M17 4.500h8M17 8h8M17 11.500h8M17 3v9" stroke="#1675b8" strokeWidth="1.500" />
          <path d="M4 14.500h9" stroke="#f19a1f" strokeWidth="1.500" /><path d="M14 14.500h9" stroke="#1675b8" strokeWidth="1.500" />
        </svg>
      </Pinned>
      <Pinned>
        <svg width="28" height="26" viewBox="0 0 28 26" fill="none">
          <path d="m1 8 7-3 4 12-8 3-3-2z" fill="#a9adad" /><path d="M1 13h2v3H1z" fill="#5cc84b" />
          <path d="m8 1 19 1.500-2 15.500-18-2z" fill="#dfe3e5" stroke="#9aa0a3" />
          <path d="m9.500 3 15.500 1-1.500 12-15-1.500z" fill="#f4fafe" />
          <path d="m9 13 3-5 2 5 2-7 2 8 3-3 2 3" stroke="#3287c9" strokeWidth="1.200" />
          <ellipse cx="17" cy="22.500" rx="7" ry="3" fill="#cdd0d2" /><path d="M15 18h4v4h-4z" fill="#b6babd" />
        </svg>
      </Pinned>
      <Pinned mark>
        <svg width="28" height="28" viewBox="0 0 28 28">
          <circle cx="14" cy="14" r="14" fill="#db4437" />
          <path d="M1.900 7A14 14 0 0 0 14 28l6-10.500L14 14 8 17.500z" fill="#0f9d58" />
          <path d="M26.100 7H14l6 10.500L14 28A14 14 0 0 0 26.100 7z" fill="#ffcd40" />
          <path d="M1.900 7 8 17.500 9 10l5-1.500h12.800A14 14 0 0 0 1.900 7z" fill="#db4437" />
          <circle cx="14" cy="14" r="6.500" fill="#f1f1f1" /><circle cx="14" cy="14" r="5.100" fill="#4285f4" />
        </svg>
      </Pinned>
      <Pinned><OfficeTile letter="W" bands={["#41a5ee", "#2b7cd3", "#185abd", "#103f91"]} plate="#1853b3" /></Pinned>
      <Pinned><OfficeTile letter="X" bands={["#2bb673", "#1e9e5c", "#12813f", "#185c37"]} plate="#0f763c" /></Pinned>
      <Pinned>
        <div className="relative h-[28px] w-[29px]">
          <svg className="absolute inset-0" width="29" height="28" viewBox="0 0 29 28">
            <circle cx="15.300" cy="14" r="13.700" fill="#ed6c47" /><path d="M15.300.3A13.700 13.700 0 0 1 29 14H15.300z" fill="#ff8f6b" /><path d="M1.600 14H29a13.700 13.700 0 0 1-27.400 0z" fill="#d35230" />
            <rect x="0" y="6.500" width="15.500" height="15.500" rx="1.500" fill="#c43e1c" />
          </svg>
          <span className="absolute top-[6.500px] left-0 w-[15.500px] text-center text-[12px] leading-[16px] font-bold">P</span>
        </div>
      </Pinned>
      <Pinned mark>
        <svg width="28" height="24" viewBox="0 0 28 24">
          <path d="M.5 0H12l2 3-2 2H.5z" fill="#e3a008" /><path d="M.5 4H11l3-2h13.500v20H.5z" fill="#ffd765" /><path d="M.5 18h27v4H.5z" fill="#f7c23c" />
          <path d="M5.500 23.500V14a2 2 0 0 1 2-2h13a2 2 0 0 1 2 2v9.500h-5V17h-7v6.500z" fill="#3f9be0" />
        </svg>
      </Pinned>
      <Pinned mark active>
        <div className="relative h-[30px] w-[30px] bg-[#fde7d4]">
          <svg className="absolute inset-0" width="30" height="30" viewBox="0 0 30 30">
            <path d="M0 0h30v12L0 22z" fill="#fbdcc2" />
            <path d="M9 5c2-2 8-2 13-2v5h-7v3h6v5h-6v6l-6 1z" fill="#c2722a" /><path d="M9 5c2-2 3-2 4-2v19l-4 1z" fill="#8f4a14" />
          </svg>
          <span className="absolute right-[4px] bottom-[1px] text-[5px] leading-[6px] font-bold text-[#ea8a3c]">360</span>
        </div>
      </Pinned>
      <div className="ml-auto flex">
        <Tray><svg width="17" height="13" viewBox="0 0 17 13" fill="none" stroke="#ddd" strokeWidth="1.800"><path d="M10 9.500C8 12 5 12.300 3 11-.5 8.500 1 3.500 5 3.500c2.500 0 4 2 5.500 4" /><path d="M6 5c1-3.500 6-5 8.500-2 2.500 3.500 0 8-3.500 8-2 0-3-1.500-4-3" /></svg></Tray>
        <Tray><svg width="15" height="15" viewBox="0 0 15 15"><path d="M5 1h5L4 14 0 14z" fill="#18a39b" /><path d="M6 1h4l5 13h-5z" fill="#1e88e5" /><path d="M4 14l4-4 2 1-3 3z" fill="#8fd14f" /></svg></Tray>
        <Tray><svg width="20" height="18" viewBox="0 0 20 18" fill="none"><path d="M3 12C-1 12 0 6 4 6.500 5 1 12 0 14 5c4 0 4 7 0 7z" fill="#d5d5d5" /><path d="M6 7c2-7 8-5 8-1z" fill="#a9a9a9" /><circle cx="14.500" cy="12.500" r="5" fill="#fff" stroke="#1e7fd0" /><path d="M12 12a2.700 2.700 0 0 1 5 0M17 13.500a2.700 2.700 0 0 1-5 0" stroke="#1370c4" strokeWidth="1.300" /></svg></Tray>
        <Tray><svg width="18" height="14" viewBox="0 0 18 14"><path d="M3.500 1.500 7 .5l.7 1h2.600l.7-1 3.500 1C17 5 18 9 17.500 12L13.500 14l-1.300-2H5.800l-1.300 2L.5 12C0 9 1 5 3.500 1.500z" fill="#fff" /><circle cx="6.300" cy="7.700" r="1.600" fill="#34312d" /><circle cx="11.700" cy="7.700" r="1.600" fill="#34312d" /></svg></Tray>
        <Tray><svg width="18" height="18" viewBox="0 0 18 18"><rect width="18" height="18" rx="5" fill="#4a8cf7" /><path d="M3.500 6h7a1 1 0 0 1 1 1v5h-7a1 1 0 0 1-1-1zM12 8l3-2v6l-3-2z" fill="#fff" /></svg></Tray>
        <Tray><svg width="20" height="20" viewBox="0 0 20 20" fill="none"><rect width="20" height="20" fill="#1c1c1a" /><path d="M8 5h9v10H8z" fill="#6fae1d" /><path d="M2 10c3-5 9-5 12 0-4 5-9 4-12 0z" fill="#1c1c1a" stroke="#7bbf20" strokeWidth="1.300" /><path d="M5 10c2-3 5-2 6 0-2 2-4 2-6 0z" stroke="#7bbf20" strokeWidth="1.300" /></svg></Tray>
        <Tray><svg width="20" height="20" viewBox="0 0 20 20" fill="none"><path d="M1 1h18v18H1z" fill="#555" stroke="#76b900" strokeWidth="1.500" /><path d="M3 4h14" stroke="#d89fd8" strokeWidth="1.500" /><path d="M3 7h14" stroke="#d09a8a" strokeWidth="1.500" /><path d="M3 10h14" stroke="#c9a36b" strokeWidth="1.500" /><path d="M3 13h14" stroke="#9fb86a" strokeWidth="1.500" /><path d="M3 16h14" stroke="#6aa8a0" strokeWidth="1.500" /><path d="M5 2v16M8 2v16M11 2v16M14 2v16" stroke="#3a3a3a" strokeWidth=".7" /></svg></Tray>
        <Tray><svg width="15" height="20" viewBox="0 0 15 20" fill="none"><rect width="15" height="20" rx="7" fill="#0a84f0" /><path d="m4 6.500 7 6.500-3.500 3.300V3.700L11 7l-7 6.500" stroke="#fff" strokeWidth="1.200" /></svg></Tray>
        <Tray><svg width="20" height="20" viewBox="0 0 20 20" fill="none"><path d="M9 0c3 2 6 3 9 3v7c0 4-5 7-9 9-4-2-8-5-8-9V3c3 0 6-1 8-3z" fill="#fff" /><path d="M9.300 0v19M1 9h17" stroke="#2d2c29" strokeWidth="1.300" /><circle cx="14.500" cy="14.500" r="5.300" fill="#10893e" /><path d="m12 14.500 2 2 3.300-3.500" stroke="#fff" strokeWidth="1.300" /></svg></Tray>
        <Tray><svg width="20" height="20" viewBox="0 0 20 20"><path d="M0 0h20v20H0z" fill="#000" /><path fillRule="evenodd" d="M2 5h16v10H2zM4 7v6c6 0 6-6 0-6zM16 7v6c-6 0-6-6 0-6z" fill="#fff" /></svg></Tray>
        <Tray>
          <svg width="20" height="20" viewBox="0 0 20 20" fill="none"><path d="M12 2c1.500-2.500 5-2 6 0 1 2-.5 5-.5 8s2 5 1 8c-1 2.500-4 2-6 0-2-1.500-3.500-1-5.500 0-3 1.500-6 0-6.500-2s1-3.500 3-4.500 1-3 1-4.500C4 4.500 6 5 8 5s3-1 4-3z" fill="#ff7800" /><circle cx="9.800" cy="10" r="2.800" stroke="#fff" strokeWidth="1.600" /><path d="M13 6.500V13" stroke="#fff" strokeWidth="1.600" /></svg>
        </Tray>
        <Tray><svg width="21" height="14" viewBox="0 0 21 14" fill="none" stroke="#fff"><path d="M6.500 3.500h12v9H5V8M19 6h1.500v4H19" strokeWidth="1.200" /><path d="M8 5h9v6H8z" fill="#fff" stroke="none" /><path d="M1 0v3M5 0v3M0 3h6v2c0 3-6 3-6 0zM3 7v3h2" strokeWidth="1.200" /></svg></Tray>
        <div className="ml-[7px] flex w-[127px] items-center">
          <svg width="17" height="17" viewBox="0 0 17 17" fill="none" strokeWidth="1.300"><path d="M1 16A15 15 0 0 1 15.500 2M4.500 16A11 11 0 0 1 15.500 6M8 16a7.500 7.500 0 0 1 7.500-6.500" stroke="#eee" /><path d="M.5 12A15 15 0 0 1 12 .8" stroke="#888" /><circle cx="14" cy="14.500" r="1.700" fill="#fff" /></svg>
          <svg className="ml-[10px]" width="21" height="17" viewBox="0 0 21 17" fill="none" strokeWidth="1.200"><path d="M1 6h3l4-4v13l-4-4H1z" stroke="#fff" /><path d="M11 6q2 2.500 0 5" stroke="#fff" /><path d="M13.500 4q4 4.500 0 9M16 2q6 6.500 0 13" stroke="#888" /></svg>
          <svg className="ml-[14px]" width="21" height="20" viewBox="0 0 21 20" fill="none" stroke="#fff" strokeWidth="1.300"><path d="m8 11 7-10 3 2-7 10-3.500 1zM8 8c-6-1-9 5-5 6 4 .5 5-4 5-4M4 14c-2 3 0 5 3 4 3-2 3-5 3-5M13 11c2-2 6-3 7-1" /></svg>
          <span className="ml-[20px] text-[13.500px] tracking-[-0.35px]">ESP</span>
        </div>
        <div className="ml-[18px] flex w-[78px] flex-col items-center text-[14.500px] leading-[24px] tracking-[-0.5px] whitespace-nowrap">
          <span>22:10</span>
          <span>21-04-2021</span>
        </div>
        <div className="relative ml-[19px] w-[50px] border-r border-[#777]">
          <svg className="absolute top-[14px] left-[2px]" width="34" height="32" viewBox="0 0 34 32" fill="none">
            <path d="M1 1h20v17H10l-4 4v-4H1z" fill="#fff" /><path d="M5 5.500h13M5 9.500h13M5 13.500h8" stroke="#2f302c" strokeWidth="1.300" />
            <circle cx="21.500" cy="20.500" r="10" fill="#3d3d3a" fillOpacity=".9" stroke="#999" />
          </svg>
          <span className="absolute top-[25px] left-[18.500px] w-[10px] text-center text-[14px] leading-[20px]">1</span>
        </div>
        <div className="w-[5px]" />
      </div>
    </footer>
  );
}

export default function App() {
  return (
    <div className="relative flex h-[1080px] w-[1920px] flex-col overflow-hidden bg-white">
      <TitleBar />
      <TabBar />
      <Ribbon />
      <Canvas />
      <Timeline />
      <Taskbar />
      <div className="absolute top-[75px] left-[139px] flex h-[26px] w-[147px] items-center justify-center rounded-full bg-[#4d4d4d] pt-[1px] font-['DejaVu_Sans',sans-serif] text-[11.500px] font-bold tracking-[-0.22px] whitespace-nowrap text-white">
        Redo Drag sketch
      </div>
    </div>
  );
}
